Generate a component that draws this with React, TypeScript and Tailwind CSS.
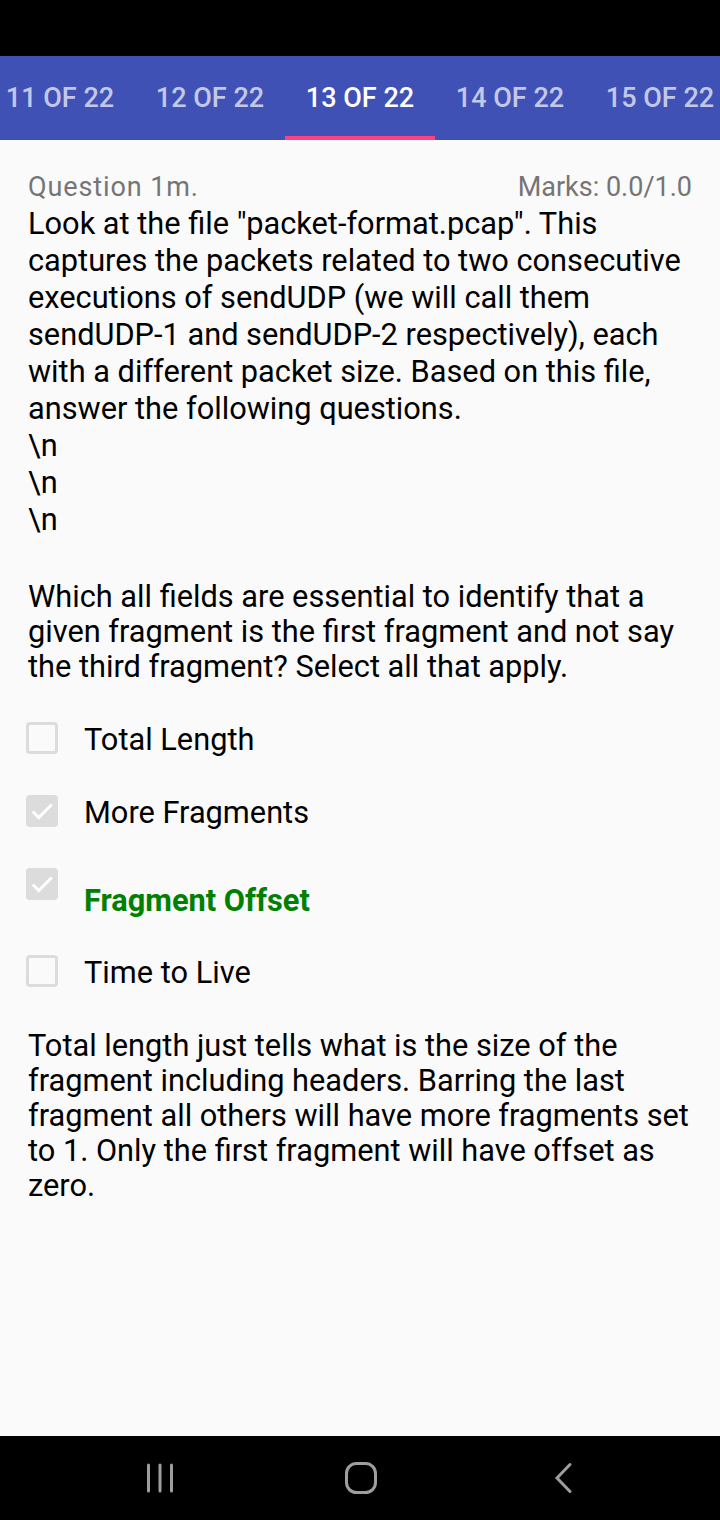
import React from "react";

const Check = ({ checked }: { checked: boolean }) => (
  <div
    className={`w-[32px] h-[32px] rounded-[4px] shrink-0 flex items-center justify-center ml-[-2px] ${
      checked ? "bg-[#dcdcdc]" : "border-[3px] border-[#dcdcdc]"
    }`}
  >
    {checked && (
      <svg width="26" height="26" viewBox="0 0 24 24">
        <path d="M3.5 12.5l5.5 5.5L21 6" fill="none" stroke="#fff" strokeWidth="2.8" />
      </svg>
    )}
  </div>
);

export default function App() {
  const tabs = ["11 OF 22", "12 OF 22", "13 OF 22", "14 OF 22", "15 OF 22"];
  return (
    <div
      className="w-[720px] h-[1520px] flex flex-col bg-[#fafafa] overflow-hidden"
      style={{ fontFamily: "Roboto, 'Liberation Sans', sans-serif" }}
    >
      <div className="h-[56px] bg-black shrink-0" />
      <div className="h-[84px] bg-[#3f51b5] shrink-0 flex ml-[-15px]">
        {tabs.map((t, i) => (
          <div
            key={t}
            className="w-[150px] shrink-0 flex flex-col items-center justify-between"
          >
            <div className="h-[4px]" />
            <div
              className={`text-[27px] font-medium leading-none ${
                i === 2 ? "text-white" : "text-white/70"
              }`}
            >
              {t}
            </div>
            <div className={`h-[4px] w-full ${i === 2 ? "bg-[#ff4081]" : ""}`} />
          </div>
        ))}
      </div>
      <div className="flex-1 px-[28px] pt-[30px] text-black">
        <div className="flex justify-between text-[27px] text-[#757575] leading-[34px]">
          <span className="tracking-[0.9px]">Question 1m.</span>
          <span>Marks: 0.0/1.0</span>
        </div>
        <div className="text-[30.75px] leading-[37px] mt-[1px]">
          Look at the file "packet-format.pcap". This captures the packets related to two
          consecutive executions of sendUDP (we will call them sendUDP-1 and sendUDP-2
          respectively), each with a different packet size. Based on this file, answer the
          following questions.
          <br />\n
          <br />\n
          <br />\n
        </div>
        <div className="text-[30.75px] leading-[35px] mt-[41px]">
          Which all fields are essential to identify that a given fragment is the first
          fragment and not say the third fragment? Select all that apply.
        </div>
        <div className="mt-[38px] flex flex-col">
          <div className="flex items-start h-[73px]">
            <Check checked={false} />
            <span className="ml-[26px] text-[30.75px] leading-[36px]">Total Length</span>
          </div>
          <div className="flex items-start h-[73px]">
            <Check checked={true} />
            <span className="ml-[26px] text-[30.75px] leading-[36px]">More Fragments</span>
          </div>
          <div className="flex items-start h-[87px]">
            <Check checked={true} />
            <span className="ml-[26px] text-[30.75px] leading-[36px] mt-[15px] font-bold text-[#008000]">
              Fragment Offset
            </span>
          </div>
          <div className="flex items-start h-[73px]">
            <Check checked={false} />
            <span className="ml-[26px] text-[30.75px] leading-[36px]">Time to Live</span>
          </div>
        </div>
        <div className="text-[30.75px] leading-[35px] mt-[0px]">
          Total length just tells what is the size of the fragment including headers. Barring
          the last fragment all others will have more fragments set to 1. Only the first
          fragment will have offset as zero.
        </div>
      </div>
      <div className="h-[84px] bg-black shrink-0 flex items-center pl-[146px]">
        <svg width="28" height="30" viewBox="0 0 28 30">
          <path d="M2.5 2v26M14 2v26M25.5 2v26" stroke="#9e9e9e" strokeWidth="3" strokeLinecap="round" />
        </svg>
        <svg width="32" height="32" viewBox="0 0 32 32" className="ml-[171px]">
          <rect x="1.5" y="1.5" width="29" height="29" rx="10" fill="none" stroke="#9e9e9e" strokeWidth="3" />
        </svg>
        <svg width="20" height="32" viewBox="0 0 20 32" className="ml-[176px]">
          <path d="M17 2.5L4 16l13 13.5" fill="none" stroke="#9e9e9e" strokeWidth="3" strokeLinecap="round" />
        </svg>
      </div>
    </div>
  );
}
